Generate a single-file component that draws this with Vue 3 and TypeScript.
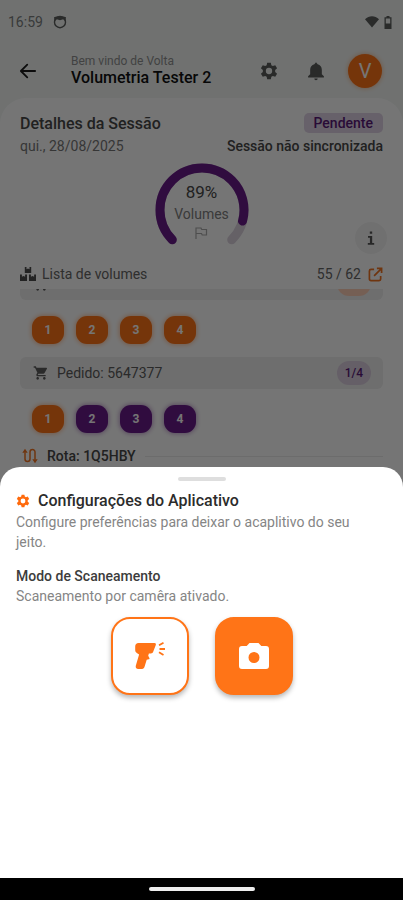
<script setup lang="ts">
import { computed, ref } from 'vue'

interface Order {
  id: string
  done: number
  volumes: boolean[]
}

type ScanMode = 'scanner' | 'camera'

const orders: Order[] = [
  { id: '2696606', done: 4, volumes: [true, true, true, true] },
  { id: '5647377', done: 1, volumes: [true, false, false, false] },
]

const progress = 89
const mode = ref<ScanMode>('camera')
const modeText = computed(() =>
  mode.value === 'camera' ? 'Scaneamento por camêra ativado.' : 'Scaneamento por leitor ativado.',
)

const gearPath =
  'M9.800 2h4.400l.6 3 1.800 1 2.900-1 2.200 3.800-2.300 2.100v2.200l2.300 2.100-2.200 3.800-2.900-1-1.800 1-.6 3H9.800l-.6-3-1.800-1-2.900 1-2.200-3.800 2.300-2.100v-2.200L2.300 8.800 4.500 5l2.900 1 1.800-1zM12 8.200a3.800 3.800 0 1 0 0 7.600 3.800 3.800 0 0 0 0-7.600z'
</script>

<template>
  <div class="screen">
    <div class="stage">
      <div class="status">
        <span class="clock">16:59</span>
        <svg class="face" viewBox="0 0 14 14" aria-hidden="true">
          <circle cx="7" cy="7.200" r="5.500" fill="none" stroke="currentColor" stroke-width="1.400" />
          <path d="M1 2.200 3.500 1.500 7 .8l3.500.7 2.500.7-.6 4.300-2.200-2.200L7 5.200 3.800 4.300 1.600 6.500z" fill="currentColor" />
        </svg>
        <svg class="wifi" viewBox="0 0 14 12" aria-hidden="true">
          <path d="M0 3.200C4-.7 10-.7 14 3.200L7 11.500z" fill="currentColor" />
        </svg>
        <svg class="battery" viewBox="0 0 8 13" aria-hidden="true">
          <path d="M2.500 0h3v1.300H7.500V13H.5V1.300h2zM1.800 2.600v4.900h4.400V2.600z" fill="currentColor" fill-rule="evenodd" />
        </svg>
      </div>

      <header class="topbar">
        <button class="plain back" type="button" aria-label="Voltar">
          <svg viewBox="0 0 24 24"><path d="M11 3.500 2.500 12l8.500 8.500M3 12h18.500" fill="none" stroke="currentColor" stroke-width="2.400" stroke-linecap="round" stroke-linejoin="round" /></svg>
        </button>
        <div class="who">
          <span class="hello">Bem vindo de Volta</span>
          <strong class="name">Volumetria Tester 2</strong>
        </div>
        <button class="plain tool" type="button" aria-label="Configurações">
          <svg viewBox="0 0 24 24"><path :d="gearPath" fill="currentColor" fill-rule="evenodd" /></svg>
        </button>
        <button class="plain tool" type="button" aria-label="Notificações">
          <svg viewBox="0 0 24 24"><path d="M12 23c1.100 0 2-.9 2-2h-4c0 1.100.9 2 2 2zm7-7v-5.500c0-3.200-1.900-5.800-5-6.500l-2-2.500L10 4c-3.100.7-5 3.300-5 6.500V16l-2.500 2.200v1.500h19v-1.500z" fill="currentColor" /></svg>
        </button>
        <button class="avatar" type="button" aria-label="Perfil">V</button>
      </header>

      <main class="card">
        <section class="session">
          <div class="line">
            <h1>Detalhes da Sessão</h1>
            <span class="pending">Pendente</span>
          </div>
          <div class="line second">
            <span class="date">qui., 28/08/2025</span>
            <span class="sync">Sessão não sincronizada</span>
          </div>
        </section>

        <section class="summary">
          <div class="gauge">
            <svg class="ring" viewBox="0 0 94 94" aria-hidden="true">
              <path class="track" d="M17.300 76.700A42 42 0 1 1 76.700 76.700" />
              <path class="value" d="M17.300 76.700A42 42 0 1 1 76.700 76.700" pathLength="100" :stroke-dasharray="`${progress} 200`" />
            </svg>
            <div class="reading">
              <span class="percent">{{ progress }}%</span>
              <span class="unit">Volumes</span>
              <svg viewBox="0 0 14 14" aria-hidden="true"><path d="M2 13V2h5l.7 1.500H12.500V9H8.200L7.500 7.500H2" fill="none" stroke="currentColor" stroke-width="1.200" /></svg>
            </div>
          </div>
          <button class="info" type="button" aria-label="Informações">
            <svg viewBox="0 0 10 16"><path d="M3.800 1.500h2.400v2.300H3.800zM2 6h4.200v7h2v1.700H1.800V13h2.100V7.700H2z" fill="currentColor" /></svg>
          </button>
        </section>

        <div class="listhead">
          <svg class="boxes" viewBox="0 0 16 14" aria-hidden="true">
            <path d="M4.800 0h1.700v2.200l1.500-.7 1.500.7V0h1.700v6H4.800zM0 7.500h1.900v2.300l1.600-.8 1.600.8V7.500H7V14H0zM9 7.500h1.900v2.300l1.600-.8 1.600.8V7.500H16V14H9z" fill="currentColor" />
          </svg>
          <h2>Lista de volumes</h2>
          <span class="total">55 / 62</span>
          <button class="plain open" type="button" aria-label="Abrir lista">
            <svg viewBox="0 0 16 16"><path d="M6.500 2.500H3.200A1.700 1.700 0 0 0 1.500 4.200v8.600a1.700 1.700 0 0 0 1.700 1.700h8.600a1.700 1.700 0 0 0 1.700-1.700V9.500M9.500 1.500h5v5M14 2 6.500 9.500" fill="none" stroke="currentColor" stroke-width="1.800" /></svg>
          </button>
        </div>

        <div class="viewport">
          <div class="orders">
            <article v-for="order in orders" :key="order.id">
              <div class="order">
                <svg viewBox="0 0 24 24" aria-hidden="true"><path d="M7 18c-1.100 0-1.990.9-1.990 2S5.900 22 7 22s2-.9 2-2-.9-2-2-2zM1 2v2h2l3.600 7.590-1.350 2.450c-.16.28-.25.61-.25.96 0 1.100.9 2 2 2h12v-2H7.420c-.14 0-.25-.11-.25-.25l.03-.12.900-1.630h7.450c.75 0 1.410-.41 1.750-1.030l3.580-6.490c.08-.14.120-.31.120-.48 0-.55-.45-1-1-1H5.210l-.94-2H1zm16 16c-1.100 0-1.990.9-1.990 2s.89 2 1.990 2 2-.9 2-2-.9-2-2-2z" fill="currentColor" /></svg>
                <span class="number">Pedido: {{ order.id }}</span>
                <span class="count" :class="{ full: order.done === order.volumes.length }">{{ order.done }}/{{ order.volumes.length }}</span>
              </div>
              <div class="chips">
                <button v-for="(read, i) in order.volumes" :key="i" class="chip" :class="{ read }" type="button">{{ i + 1 }}</button>
              </div>
            </article>
            <div class="route">
              <svg viewBox="0 0 16 16" aria-hidden="true">
                <path d="M3 4.500V11a2.500 2.500 0 0 0 5 0V4a2.500 2.500 0 0 1 5 0v7.500" fill="none" stroke="currentColor" stroke-width="1.500" />
                <path d="M3 .8 5.700 4.800H.3zM13 15.200l-2.700-4h5.400z" fill="currentColor" />
              </svg>
              <span>Rota: 1Q5HBY</span>
              <hr />
            </div>
          </div>
        </div>
      </main>

      <div class="scrim"></div>

      <section class="sheet" role="dialog" aria-labelledby="sheet-title">
        <div class="handle"></div>
        <h2 id="sheet-title">
          <svg viewBox="1 1 22 22" aria-hidden="true"><path :d="gearPath" fill="currentColor" fill-rule="evenodd" /></svg>
          Configurações do Aplicativo
        </h2>
        <p class="lead">Configure preferências para deixar o acaplitivo do seu jeito.</p>
        <h3>Modo de Scaneamento</h3>
        <p>{{ modeText }}</p>
        <div class="modes">
          <button class="mode" :class="{ active: mode === 'scanner' }" type="button" aria-label="Leitor" @click="mode = 'scanner'">
            <svg viewBox="0 0 32 30">
              <path d="M4.500 2h16c1.200 0 1.700.9 1.300 1.900l-2.600 6.900c-.4 1.200-1.200 1.700-2.300 1.700h-2l-.7 2.200 1.200 2.200c.3.700 0 1.200-.7 1.400l-2 .5-2 6.500C10.100 27.200 9.200 28.300 7.500 28H4.300c-2-.2-3-1.500-2.500-3.300l3.300-11.200-2.300-1.500C1.600 11.200 1.200 10.200 1.200 9V5.500C1.200 3.200 2.500 2 4.500 2z" fill="currentColor" />
              <path d="M25 4.300l4.500-2.500M25.500 8h5.500M25 11.300l4.500 2.700" fill="none" stroke="currentColor" stroke-width="1.800" />
            </svg>
          </button>
          <button class="mode" :class="{ active: mode === 'camera' }" type="button" aria-label="Câmera" @click="mode = 'camera'">
            <svg viewBox="0 0 32 30">
              <path d="M11.500 2h9l2.800 3H28a3 3 0 0 1 3 3v17a3 3 0 0 1-3 3H4a3 3 0 0 1-3-3V8a3 3 0 0 1 3-3h4.700zM16 11a5.500 5.500 0 1 0 0 11 5.500 5.500 0 0 0 0-11z" fill="currentColor" fill-rule="evenodd" />
            </svg>
          </button>
        </div>
      </section>
    </div>
    <div class="navbar"><span></span></div>
  </div>
</template>

<style>
body {
  margin: 0;
  background: #000;
}
</style>

<style scoped>
.screen {
  display: flex;
  flex-direction: column;
  height: 100vh;
  overflow: hidden;
  font-family: Roboto, "Liberation Sans", sans-serif;
  color: #484848;
}
.screen *,
.screen {
  box-sizing: border-box;
}
h1, h2, h3, p {
  margin: 0;
  font-weight: 500;
}
svg {
  display: block;
  flex: none;
}
button {
  padding: 0;
  border: 0;
  font: inherit;
  cursor: pointer;
}
.plain {
  display: grid;
  place-items: center;
  background: none;
  color: inherit;
}
.stage {
  position: relative;
  display: flex;
  flex-direction: column;
  flex: 1;
  min-height: 0;
  overflow: hidden;
  background: #f3f7f5;
}
.status {
  display: flex;
  align-items: center;
  height: 44px;
  padding: 0 11px 0 8px;
  color: #7c7f7e;
}
.clock {
  font-size: 14px;
}
.face {
  width: 14px;
  height: 14px;
  margin-left: 10px;
}
.wifi {
  width: 14px;
  height: 12px;
  margin-left: auto;
}
.battery {
  width: 8px;
  height: 13px;
  margin-left: 5px;
}
.face, .wifi, .battery {
  color: #5c5e5d;
}
.topbar {
  display: flex;
  align-items: center;
  height: 54px;
  padding: 0 21px 0 19px;
}
.back {
  width: 18px;
  height: 18px;
  color: #1c1c1c;
}
.back svg {
  width: 18px;
}
.who {
  display: flex;
  flex-direction: column;
  flex: 1;
  margin-left: 34px;
}
.hello {
  font-size: 12px;
  line-height: 14px;
  color: #909090;
}
.name {
  font-size: 16px;
  line-height: 20px;
  font-weight: 500;
  color: #101010;
}
.tool {
  width: 20px;
  height: 20px;
  margin-right: 27px;
  color: #5a5c5b;
}
.tool svg {
  width: 20px;
}
.tool + .avatar {
  margin-left: -5px;
}
.avatar {
  width: 34px;
  height: 34px;
  border-radius: 50%;
  background: #ff7417;
  color: #fff;
  font-size: 20px;
  box-shadow: 0 0 5px rgba(255, 116, 23, 0.5);
}
.card {
  display: flex;
  flex-direction: column;
  flex: 1;
  min-height: 0;
  padding: 14px 20px 0;
  border-radius: 26px 26px 0 0;
  background: #fff;
}
.line {
  display: flex;
  justify-content: space-between;
  align-items: center;
  height: 22px;
}
.line h1 {
  font-size: 16px;
}
.pending {
  padding: 0 10px;
  border-radius: 5px;
  background: #e1d3e6;
  color: #5a1a78;
  font-size: 14px;
  line-height: 20px;
  font-weight: 500;
}
.date {
  font-size: 14px;
  color: #777;
}
.sync {
  font-size: 14px;
  font-weight: 500;
}
.second {
  height: 24px;
}
.summary {
  display: grid;
  grid-template-columns: 1fr auto 1fr;
  align-items: end;
  padding-top: 5px;
}
.gauge {
  grid-column: 2;
  display: grid;
  justify-items: center;
  width: 94px;
  height: 96px;
}
.ring,
.reading {
  grid-area: 1 / 1;
}
.ring {
  width: 94px;
  height: 94px;
}
.ring path {
  fill: none;
  stroke-width: 9;
  stroke-linecap: round;
}
.track {
  stroke: #dcd3df;
}
.value {
  stroke: #6a1b8a;
}
.reading {
  display: flex;
  flex-direction: column;
  align-items: center;
  padding-top: 18px;
}
.percent {
  font-size: 17px;
  line-height: 22px;
}
.unit {
  font-size: 14px;
  line-height: 22px;
  color: #808080;
}
.reading svg {
  width: 14px;
  margin-top: 1px;
  color: #aaa;
}
.info {
  justify-self: end;
  display: grid;
  place-items: center;
  width: 32px;
  height: 32px;
  margin: 0 -4px 5px 0;
  border-radius: 50%;
  background: #f5f5f5;
  color: #555;
}
.info svg {
  width: 10px;
}
.listhead {
  display: flex;
  align-items: center;
  height: 30px;
  color: #666;
}
.boxes {
  width: 16px;
  height: 14px;
  color: #4c4c4c;
}
.listhead h2 {
  flex: 1;
  margin-left: 6px;
  font-size: 14px;
  font-weight: 400;
}
.total {
  font-size: 14px;
}
.open {
  margin-left: 7px;
  color: #f27422;
}
.open svg {
  width: 15px;
}
.viewport {
  flex: 1;
  min-height: 0;
  overflow: hidden;
}
/* The list is scrolled so that the first order is cut by the heading. */
.orders {
  margin-top: -21px;
}
.order {
  display: flex;
  align-items: center;
  height: 32px;
  padding: 0 12px 0 13px;
  border-radius: 6px;
  background: #efefef;
  color: #5c5c5c;
}
.order svg {
  width: 16px;
}
.number {
  flex: 1;
  margin-left: 8px;
  font-size: 14px;
}
.count {
  padding: 0 8px;
  border-radius: 12px;
  background: #dccfe1;
  color: #5a1a78;
  font-size: 12px;
  line-height: 24px;
  font-weight: 500;
}
.count.full {
  background: #ffcfb8;
  color: #e86a18;
}
.chips {
  display: flex;
  gap: 12px;
  padding: 16px 12px 13px;
}
.chip {
  width: 32px;
  height: 28px;
  border-radius: 11px;
  background: #6a1b8a;
  color: #fff;
  font-size: 12px;
  font-weight: 700;
  box-shadow: 0 0 4px 1px rgba(106, 27, 138, 0.4);
}
.chip.read {
  background: #ff7417;
  box-shadow: 0 0 4px 1px rgba(255, 116, 23, 0.4);
}
.route {
  display: flex;
  align-items: center;
  gap: 9px;
  height: 20px;
  padding-left: 2px;
  font-size: 14px;
  font-weight: 500;
}
.route svg {
  width: 16px;
  color: #f27422;
}
.route hr {
  flex: 1;
  margin: 0;
  border: 0;
  border-top: 1px solid #ebebeb;
}
.scrim {
  position: absolute;
  inset: 0;
  background: rgba(0, 0, 0, 0.54);
}
.sheet {
  position: absolute;
  inset: auto 0 0;
  min-height: 46.8%;
  padding: 10px 16px;
  border-radius: 20px 20px 0 0;
  background: #fff;
}
.handle {
  width: 48px;
  height: 4px;
  margin: 0 auto 9px;
  border-radius: 2px;
  background: #dedede;
}
.sheet h2 {
  display: flex;
  align-items: center;
  gap: 8px;
  font-size: 16px;
  line-height: 22px;
  color: #2c2c2c;
}
.sheet h2 svg {
  width: 14px;
  color: #ff6a0c;
}
.sheet p {
  font-size: 14px;
  line-height: 20px;
  font-weight: 400;
  color: #858585;
}
.sheet .lead {
  padding-right: 16px;
}
.sheet h3 {
  margin-top: 14px;
  font-size: 14px;
  line-height: 20px;
  color: #3c3c3c;
}
.modes {
  display: flex;
  justify-content: center;
  gap: 26px;
  margin-top: 11px;
}
.mode {
  display: grid;
  place-items: center;
  width: 78px;
  height: 78px;
  border: 2px solid #ff7417;
  border-radius: 19px;
  background: #fff;
  color: #ff7417;
  box-shadow: 0 3px 5px rgba(0, 0, 0, 0.28);
}
.mode svg {
  width: 32px;
}
.mode.active {
  background: #ff7417;
  color: #fff;
}
.navbar {
  display: grid;
  place-items: center;
  height: 22px;
  background: #000;
}
.navbar span {
  width: 106px;
  height: 4px;
  border-radius: 2px;
  background: #eee;
}
</style>
